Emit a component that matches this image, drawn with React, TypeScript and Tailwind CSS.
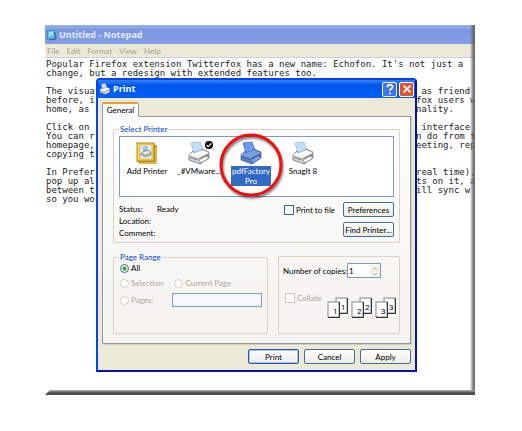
import React from 'react';

const lines: [string, string][] = [
  ["Popular Firefox extension Twitterfox has a new name: Echofon. It's not just a", ''],
  ['change, but a redesign with extended features too.', ''],
  ['', ''],
  ['The visua', ' as friend'],
  ['before, i', 'fox users w'],
  ['home, as', 'nality.'],
  ['', ''],
  ['Click on', ' interface'],
  ['You can r', 'n do from t'],
  ['homepage,', 'eeting, rep'],
  ['copying t', ''],
  ['', ''],
  ['In Prefer', 'real time),'],
  ['pop up al', 'ts on it, a'],
  ['between t', 'ill sync w'],
  ['so you wo', ''],
];

function PrinterIcon({ selected = false, className = 'h-6 w-6' }: { selected?: boolean; className?: string }) {
  const c = selected
    ? { paper: '#6a9df0', top: '#7d9fd8', front: '#5a80c4', side: '#4469ae', line: '#3a60a4', tray: '#84a4de' }
    : { paper: '#c4defb', top: '#f6f6f3', front: '#d0d0cd', side: '#8f9194', line: '#66696d', tray: '#f7f7f4' };
  return (
    <svg viewBox="0 0 24 24" className={className} aria-hidden="true">
      <path d="M4 2 L13 1 L16 9 L7 12 Z" fill={c.paper} stroke={selected ? c.line : '#8fb3dc'} strokeWidth=".7" />
      <path d="M2 14 L6 10 L7 12 L15 9 L15 8 L22 11 L22 17 L13 23 L2 19 Z" fill={c.front} stroke={c.line} strokeWidth=".7" />
      <path d="M2 14 L6 11 L7 12 L15 9 L22 12 L12 17 Z" fill={c.top} />
      <path d="M12 17 L22 12 L22 17 L13 23 Z" fill={c.side} />
      <path d="M12 19 L19 15 L22 17 L14 22 Z" fill={c.tray} stroke={c.line} strokeWidth=".5" />
      <path d="M3 16 L11 19" stroke={c.line} strokeWidth=".9" />
    </svg>
  );
}

function AddPrinterIcon() {
  return (
    <svg viewBox="0 0 24 24" className="h-6 w-6" aria-hidden="true">
      <path d="M2 2 L18 2 L22 5 L22 23 L5 23 L2 20 Z" fill="#b88716" />
      <rect x="2" y="2" width="17" height="18" fill="#f7d65c" stroke="#b8860b" />
      <rect x="5" y="4" width="12" height="14" fill="#e9f0f8" stroke="#cf9e25" strokeWidth=".6" />
      <path d="M7 6 L12 5 L14 10 L9 12 Z" fill="#9fc6f2" />
      <path d="M6 12 L9 10 L13 9 L16 11 L16 14 L11 16 L6 14 Z" fill="#b4b7bb" stroke="#66696d" strokeWidth=".5" />
      <path d="M7 12 L13 10 L15 11 L11 13 Z" fill="#f5f5f3" />
      <path d="M5 22 L21 22 L21 6" stroke="#ffe893" fill="none" />
    </svg>
  );
}

function Printer({ name, children, selected = false }: { name: string; children: React.ReactNode; selected?: boolean }) {
  return (
    <button type="button" className="flex w-13 flex-col items-center gap-px">
      <span className="relative">{children}</span>
      <span className={selected ? 'w-10 bg-[#316ac5] text-center text-white' : 'whitespace-nowrap'}>{name}</span>
    </button>
  );
}

function PushButton({ children, focus = false }: { children: React.ReactNode; focus?: boolean }) {
  return (
    <button
      type="button"
      className={`flex h-[15px] w-[51px] shrink-0 items-center justify-center rounded-xs border bg-linear-to-b from-white to-[#ecebe4] whitespace-nowrap ${
        focus ? 'border-[#2c5aa8] shadow-[inset_0_0_0_1px_#a9c3ef]' : 'border-[#456f96]'
      }`}
    >
      {children}
    </button>
  );
}

function Radio({ label, on = false, disabled = false }: { label: string; on?: boolean; disabled?: boolean }) {
  return (
    <label className={`flex items-center gap-0.5 ${disabled ? 'text-[#aca899]' : ''}`}>
      <input
        type="radio"
        name="range"
        defaultChecked={on}
        disabled={disabled}
        className="h-[9px] w-[9px] appearance-none rounded-full border border-[#3c6488] bg-white checked:bg-[radial-gradient(circle,#21a121_0_1px,#fff_3px)] disabled:border-[#d0cec2]"
      />
      {label}
    </label>
  );
}

function CopyPair({ n }: { n: number }) {
  return (
    <svg viewBox="0 0 22 22" className="h-[22px] w-[22px]" aria-hidden="true" fontFamily="Roboto, sans-serif" fontSize="8">
      <rect x="9" y="1" width="11" height="15" fill="#fff" stroke="#888" />
      <path d="M20.500 1 V16.500 H9" fill="none" stroke="#333" />
      <text x="14" y="13">{n}</text>
      <rect x="1" y="5" width="11" height="15" fill="#fff" stroke="#888" />
      <path d="M12.500 5 V20.500 H1" fill="none" stroke="#333" />
      <text x="6" y="17">{n}</text>
    </svg>
  );
}

function PrintDialog() {
  return (
    <section
      aria-label="Print"
      className="absolute top-[53px] left-[51px] flex w-[321px] flex-col rounded-t-sm border-2 border-[#0843e8] border-r-[#0015a8] border-b-[#0015a8] bg-[#ece9d8] font-[Lato,'Liberation_Sans',sans-serif] text-[8px] leading-[10px] text-black"
    >
      <header className="flex h-[18px] items-center gap-0.5 bg-linear-to-b from-[#2f83fb] via-[#0055e8] via-30% to-[#0060fa] pr-px pl-px text-white">
        <PrinterIcon className="h-3 w-3" />
        <h2 className="grow font-['Open_Sans',sans-serif] text-[9px] font-bold">Print</h2>
        <div className="flex gap-0.5">
          <button type="button" aria-label="Help" className="flex h-[15px] w-[15px] items-center justify-center rounded-xs border border-white bg-[#3f72e8]">
            <svg viewBox="0 0 14 14" className="h-3 w-3" fill="none" stroke="#fff" strokeWidth="2">
              <path d="M4 5 C4 1 10 1 10 4.500 C10 7 7 6.500 7 9" />
              <path d="M7 11 V13" />
            </svg>
          </button>
          <button type="button" aria-label="Close" className="flex h-[15px] w-[15px] items-center justify-center rounded-xs border border-white bg-[#e25431]">
            <svg viewBox="0 0 14 14" className="h-3 w-3" stroke="#fff" strokeWidth="2">
              <path d="M3 3 L11 11 M11 3 L3 11" />
            </svg>
          </button>
        </div>
      </header>

      <div className="flex flex-col px-1 pt-1 pb-[6px]">
        <div role="tablist" className="z-10 -mb-px flex">
          <button type="button" role="tab" aria-selected="true" className="h-[15px] w-[37px] rounded-t-xs border border-t-2 border-[#919b9c] border-t-[#f0a030] border-b-[#fcfcfe] bg-[#fcfcfe]">
            General
          </button>
        </div>
        <div className="flex flex-col gap-[9px] border border-[#919b9c] bg-linear-to-b from-[#fdfdfe] to-[#f4f3ee] px-[10px] pt-[7px] pb-[9px] shadow-[1px_1px_0_#d0cfc0]">
          <fieldset className="rounded-xs border border-[#d5d4c5] px-[5px] pt-0.5 pb-1">
            <legend className="px-px text-[#0046d5]">Select Printer</legend>
            <div className="flex h-[61px] items-start border border-[#7f9db9] bg-white pt-1 pl-px">
              <Printer name="Add Printer"><AddPrinterIcon /></Printer>
              <Printer name="_#VMware...">
                <PrinterIcon />
                <svg viewBox="0 0 10 10" className="absolute top-0 -right-0.5 h-2 w-2" aria-hidden="true">
                  <circle cx="5" cy="5" r="5" fill="#000" />
                  <path d="M2 5 L4 7 L8 3" stroke="#fff" strokeWidth="1.500" fill="none" />
                </svg>
              </Printer>
              <Printer name="pdfFactory Pro" selected>
                <PrinterIcon selected />
                <svg viewBox="0 0 66 66" className="pointer-events-none absolute -top-[9px] -left-[21px] h-[66px] w-[66px] max-w-none drop-shadow-[1px_2px_1px_#0008]" aria-hidden="true">
                  <circle cx="33" cy="33" r="30" fill="none" stroke="#f80c0c" strokeWidth="3" />
                </svg>
              </Printer>
              <Printer name="SnagIt 8"><PrinterIcon /></Printer>
            </div>
            <div className="flex justify-between pt-[5px]">
              <dl className="grid grid-cols-[38px_1fr] gap-y-0.5 pt-0.5">
                <dt>Status:</dt><dd>Ready</dd>
                <dt>Location:</dt><dd />
                <dt>Comment:</dt><dd />
              </dl>
              <div className="flex flex-col items-end gap-[5px]">
                <div className="flex items-center gap-2">
                  <label className="flex items-center gap-0.5">
                    <input type="checkbox" className="h-[10px] w-[10px] appearance-none border border-[#3c6488] bg-white" />
                    Print to file
                  </label>
                  <PushButton>Preferences</PushButton>
                </div>
                <PushButton>Find Printer...</PushButton>
              </div>
            </div>
          </fieldset>

          <div className="flex gap-[10px]">
            <fieldset className="h-[82px] w-[155px] rounded-xs border border-[#d5d4c5] pr-[5px] pl-[6px]">
              <legend className="-ml-px px-px text-[#0046d5]">Page Range</legend>
              <div className="flex flex-col gap-[5px] pt-px">
                <Radio label="All" on />
                <div className="flex gap-[11px]">
                  <Radio label="Selection" disabled />
                  <Radio label="Current Page" disabled />
                </div>
                <div className="flex items-center justify-between">
                  <Radio label="Pages:" disabled />
                  <input type="text" aria-label="Page numbers" disabled className="h-[14px] w-[90px] border border-[#7f9db9] bg-[#f8f8fb]" />
                </div>
              </div>
            </fieldset>
            <fieldset className="mt-1 flex min-w-0 grow flex-col gap-[15px] rounded-xs border border-[#d5d4c5] pt-[6px] pl-1">
              <label className="flex items-center">
                Number of copies:
                <span className="flex h-[15px] w-[34px] items-center border border-[#7f9db9] bg-white pl-px">
                  <input type="text" defaultValue="1" className="w-0 grow" />
                  <svg viewBox="0 0 10 12" className="h-3 w-[10px] bg-[#f1f0ea]" fill="none" stroke="#b4b2a6" aria-hidden="true">
                    <path d="M3 5 L5 3 L7 5 M3 8 L5 10 L7 8" />
                  </svg>
                </span>
              </label>
              <div className="flex items-start justify-between pr-0.5">
                <label className="flex items-center gap-0.5 pl-0.5 text-[#aca899]">
                  <input type="checkbox" disabled className="h-[10px] w-[10px] appearance-none border border-[#cac8bb] bg-white" />
                  Collate
                </label>
                <div className="flex gap-0.5 pt-1">
                  <CopyPair n={1} />
                  <CopyPair n={2} />
                  <CopyPair n={3} />
                </div>
              </div>
            </fieldset>
          </div>
        </div>
        <div className="flex justify-end gap-[5px] pt-[5px]">
          <PushButton focus>Print</PushButton>
          <PushButton>Cancel</PushButton>
          <PushButton>Apply</PushButton>
        </div>
      </div>
    </section>
  );
}

export default function App() {
  return (
    <main className="min-h-screen bg-white pt-[25px] pr-[47px] pl-[45px]">
      <section aria-label="Notepad" className="relative">
        <header className="flex h-[19px] items-center gap-0.5 bg-linear-to-b from-[#96b2ee] via-[#7b96df] via-30% to-[#829fe6] text-[#e2eafc]">
          <svg viewBox="0 0 12 12" className="h-3 w-3" aria-hidden="true">
            <path d="M2 2 L9 1 L10 9 L3 11 Z" fill="#64c3e8" stroke="#4082ba" />
            <path d="M4 4 L8 3 M4 6 L8 5" stroke="#d7f4ff" />
            <path d="M10 3 L11 10 L4 11" fill="none" stroke="#3a63a8" />
          </svg>
          <h1 className="font-['Open_Sans',sans-serif] text-[9px] font-bold">Untitled - Notepad</h1>
        </header>
        <nav className="flex h-[14px] items-center gap-[7px] border-b border-[#c5d2e2] bg-[#ece9d8] pl-0.5 font-[Lato,'Liberation_Sans',sans-serif] text-[8px] text-[#a5a294]">
          {['File', 'Edit', 'Format', 'View', 'Help'].map((m) => (
            <button type="button" key={m}>{m}</button>
          ))}
        </nav>
        <div className="h-[337px] overflow-hidden pt-0.5 pl-px font-['DejaVu_Sans_Mono',monospace] text-[9px] leading-[9px] whitespace-pre text-[#222]">
          {lines.map(([left, right], i) => (
            <p key={i} className="flex h-[9px]">
              <span className={right ? 'w-[370px] shrink-0' : ''}>{left}</span>
              <span>{right}</span>
            </p>
          ))}
        </div>
        <PrintDialog />
        <div className="pointer-events-none absolute inset-y-0 right-0 w-[5px] bg-linear-to-r from-[#55555500] via-[#666666b0] to-[#606060]" />
        <div className="pointer-events-none absolute inset-x-0 bottom-0 h-[5px] bg-linear-to-b from-[#bbb] via-[#555857] to-[#444646] [clip-path:polygon(5px_0,100%_0,100%_100%,0_100%)]" />
      </section>
    </main>
  );
}
